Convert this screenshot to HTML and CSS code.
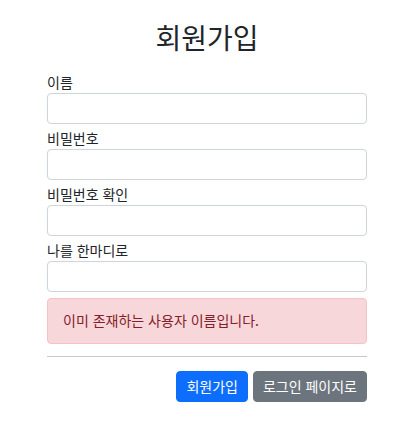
FILE: index.html
```html
<!DOCTYPE html>
<html lang="ko">
<head>
<meta charset="utf-8">
<link rel="stylesheet" href="styles.css">
</head>
<body>
<div class="page">
  <h2 class="title">회원가입</h2>
  <form class="form">
    <div class="field">
      <label class="label">이름</label>
      <input class="input" type="text">
    </div>
    <div class="field">
      <label class="label">비밀번호</label>
      <input class="input" type="password">
    </div>
    <div class="field">
      <label class="label">비밀번호 확인</label>
      <input class="input" type="password">
    </div>
    <div class="field">
      <label class="label">나를 한마디로</label>
      <input class="input" type="text">
    </div>
    <div class="alert">이미 존재하는 사용자 이름입니다.</div>
    <hr class="divider">
    <div class="actions">
      <button type="button" class="btn btn-primary">회원가입</button>
      <button type="button" class="btn btn-secondary">로그인 페이지로</button>
    </div>
  </form>
</div>
</body>
</html>
```

FILE: styles.css
```css
* { box-sizing: border-box; }
body {
  margin: 0;
  background: #fff;
  color: #212529;
  font-family: "Noto Sans CJK KR", "Noto Sans", sans-serif;
  font-size: 14px;
  line-height: 1.5;
}
.page {
  width: 320px;
  margin-left: 47px;
  padding-top: 16px;
}
.title {
  margin: 0 0 14px;
  text-align: center;
  font-size: 28px;
  font-weight: 400;
  line-height: 42px;
}
.form {
  display: flex;
  flex-direction: column;
}
.field {
  display: flex;
  flex-direction: column;
  margin-bottom: 4px;
}
.label {
  line-height: 21px;
  height: 21px;
}
.input {
  height: 31px;
  border: 1px solid #ced4da;
  border-radius: 4px;
  font: inherit;
  padding: 4px 8px;
}
.alert {
  margin-top: 2px;
  height: 46px;
  padding: 11px 15px;
  border: 1px solid #f5c2c7;
  border-radius: 4px;
  background: #f8d7da;
  color: #842029;
}
.divider {
  margin: 12px 0 14px;
  border: 0;
  border-top: 1px solid #c8c9ca;
}
.actions {
  display: flex;
  justify-content: flex-end;
  gap: 5px;
}
.btn {
  height: 31px;
  padding: 4px 9px;
  border: 1px solid transparent;
  border-radius: 4px;
  font: inherit;
  color: #fff;
}
.btn-primary { background: #0d6efd; border-color: #0d6efd; }
.btn-secondary { background: #6c757d; border-color: #6c757d; }
```
